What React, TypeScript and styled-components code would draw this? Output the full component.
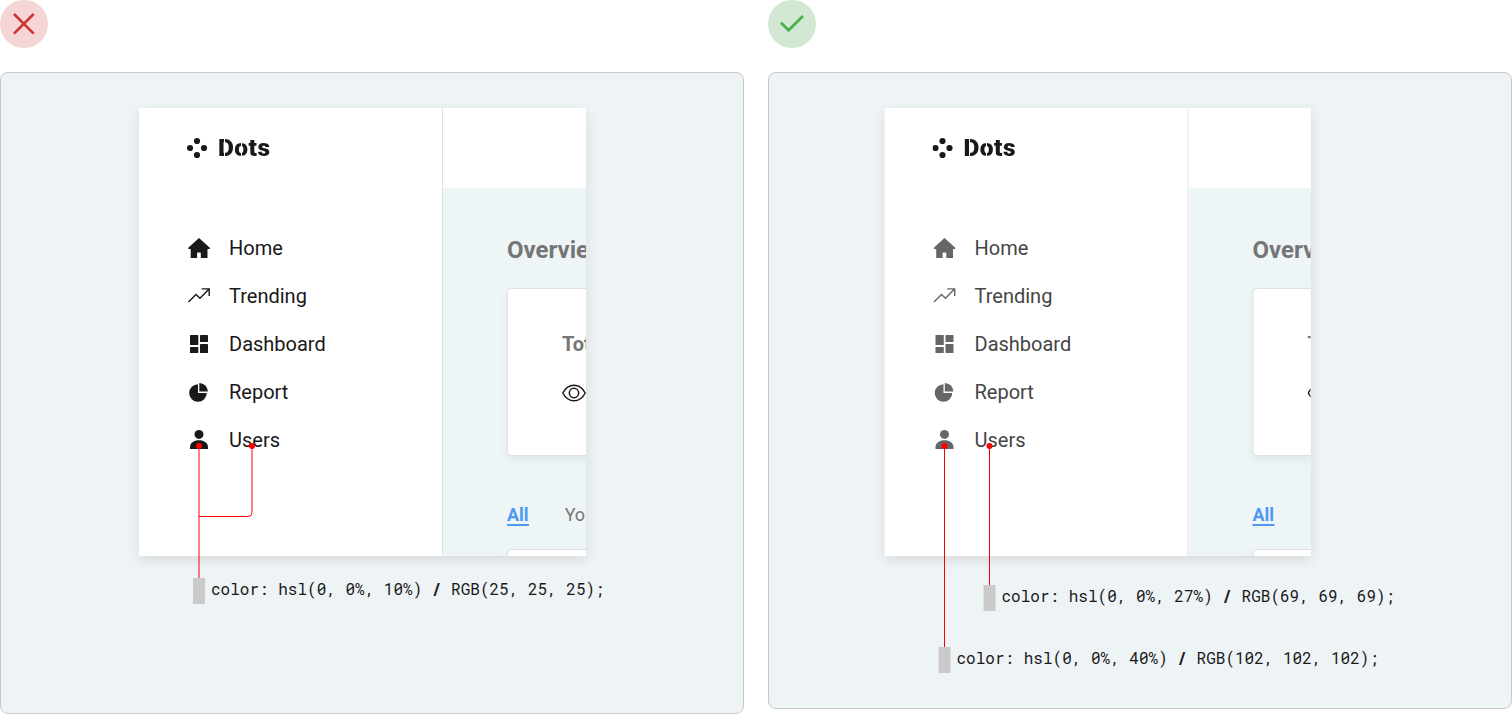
import React from 'react';
import styled, { createGlobalStyle } from 'styled-components';

const GlobalStyle = createGlobalStyle`
  *, *::before, *::after { box-sizing: border-box; }
  body { margin: 0; background: #fff; font-family: Roboto, sans-serif; overflow: hidden; }
  svg { display: block; }
`;

const Comparison = styled.main`
  display: grid;
  grid-template-columns: 744px 744px;
  column-gap: 24px;
  align-items: start;
  width: 1512px;
  height: 714px;
`;

const Example = styled.section`
  display: flex;
  flex-direction: column;
  gap: 24px;
`;

const Badge = styled.div<{ $good: boolean }>`
  width: 48px;
  height: 48px;
  border-radius: 50%;
  background: ${(p) => (p.$good ? '#d2e8d3' : '#f5d5d6')};
  color: ${(p) => (p.$good ? '#4caf50' : '#cc3333')};
`;

const Panel = styled.div<{ $height: number }>`
  position: relative;
  height: ${(p) => p.$height}px;
  padding-top: 35px;
  border: 1px solid #c8c8c8;
  border-radius: 8px;
  background: #eef3f6;
`;

const Mock = styled.div<{ $left: number; $width: number; $shift: number }>`
  display: flex;
  width: ${(p) => p.$width}px;
  height: 448px;
  margin-left: ${(p) => p.$left}px;
  overflow: hidden;
  background: #fff;
  box-shadow: 0 4px 12px rgba(0, 0, 0, 0.1);
  transform: ${(p) => (p.$shift ? `translateX(${p.$shift}px)` : 'none')};
`;

const Sidebar = styled.aside`
  flex: none;
  width: 304px;
  padding: 28px 0 0 48px;
  border-right: 1px solid #e0e0e0;
`;

const Brand = styled.div`
  display: flex;
  align-items: center;
  gap: 9px;
  height: 24px;
  color: #191919;
`;

/* Thin transparent stripes slit the letters for the stencil look. */
const BrandName = styled.span`
  font-size: 24.5px;
  line-height: 24px;
  font-weight: 900;
  letter-spacing: 0.5px;
  color: transparent;
  background: linear-gradient(
    90deg,
    #191919 6px, transparent 6px, transparent 7px,
    #191919 7px, #191919 23px, transparent 23px, transparent 24px,
    #191919 24px
  );
  background-clip: text;
  -webkit-background-clip: text;
`;

const Menu = styled.nav`
  display: flex;
  flex-direction: column;
  margin-top: 64px;
`;

const MenuItem = styled.div<{ $color: string }>`
  display: flex;
  align-items: center;
  gap: 18px;
  height: 48px;
  font-size: 20px;
  line-height: 24px;
  color: ${(p) => p.$color};
`;

const MenuIcon = styled.svg<{ $color: string }>`
  flex: none;
  width: 24px;
  height: 24px;
  color: ${(p) => p.$color};
`;

const Content = styled.div`
  flex: none;
  width: 400px;
`;

const TopBar = styled.div`
  height: 80px;
  background: #fff;
`;

const Body = styled.div`
  height: 368px;
  padding: 46px 0 0 64px;
  background: #edf5f7;
`;

const Heading = styled.h2`
  margin: 0 0 22px;
  font-size: 24px;
  line-height: 32px;
  font-weight: 700;
  color: #757575;
`;

const Card = styled.div`
  height: 168px;
  padding: 43px 0 0 54px;
  border: 1px solid #e0e0e0;
  border-radius: 4px;
  background: #fff;
  box-shadow: 0 4px 10px rgba(0, 0, 0, 0.06);
`;

const CardTitle = styled.div`
  margin-bottom: 25px;
  font-size: 20px;
  line-height: 24px;
  font-weight: 700;
  color: #757575;
`;

const Tabs = styled.div`
  display: flex;
  gap: 36px;
  height: 24px;
  margin: 46px 0 23px;
`;

const Tab = styled.span<{ $active?: boolean }>`
  height: 24px;
  font-size: 18px;
  line-height: 26px;
  font-weight: ${(p) => (p.$active ? 700 : 400)};
  color: ${(p) => (p.$active ? '#4f98f3' : '#757575')};
  border-bottom: ${(p) => (p.$active ? '2px solid #4f98f3' : '0')};
`;

const Note = styled.div<{ $left: number; $top: number }>`
  display: flex;
  align-items: flex-start;
  gap: 6px;
  height: 26px;
  margin: ${(p) => p.$top}px 0 0 ${(p) => p.$left}px;
`;

const Swatch = styled.svg`
  flex: none;
  width: 12px;
  height: 26px;
  overflow: visible;
`;

const Code = styled.code`
  display: block;
  font: 400 16px/22px "Roboto Mono", "DejaVu Sans Mono", monospace;
  white-space: pre;
  color: #191919;
`;

const Leaders = styled.svg`
  position: absolute;
  left: -1px;
  top: -1px;
  pointer-events: none;
`;

function HomeIcon({ color }: { color: string }) {
  return (
    <MenuIcon $color={color} viewBox="0 0 24 24">
      <path fill="currentColor" d="M12 1.9 22.8 11.8V13H20.5V22H13.8V17a.6.6 0 0 0-.6-.6H10.7a.6.6 0 0 0-.6.6v5H3.7V13H1.3V11.8Z" />
    </MenuIcon>
  );
}

function TrendingIcon({ color }: { color: string }) {
  return (
    <MenuIcon $color={color} viewBox="0 0 24 24">
      <path fill="none" stroke="currentColor" strokeWidth="1.4" d="M1.5 18 9 10.4 13 14.2 22 5M14.7 4.9H22.2V12" />
    </MenuIcon>
  );
}

function DashboardIcon({ color }: { color: string }) {
  return (
    <MenuIcon $color={color} viewBox="0 0 24 24">
      <g fill="currentColor">
        <rect x="3" y="3" width="8.3" height="10" rx=".6" />
        <rect x="3" y="15" width="8.3" height="6" rx=".6" />
        <rect x="13" y="3" width="8" height="7" rx=".6" />
        <rect x="13" y="12" width="8" height="9" rx=".6" />
      </g>
    </MenuIcon>
  );
}

function ReportIcon({ color }: { color: string }) {
  return (
    <MenuIcon $color={color} viewBox="0 0 24 24">
      <g fill="currentColor">
        <path d="M11 4.2V13.1H19.8A8.8 8.8 0 1 1 11 4.2Z" />
        <path d="M12.3 2.9A8.7 8.7 0 0 1 20.9 11.6H12.3Z" />
      </g>
    </MenuIcon>
  );
}

function UsersIcon({ color }: { color: string }) {
  return (
    <MenuIcon $color={color} viewBox="0 0 24 24">
      <circle cx="12" cy="6.4" r="4.5" fill="currentColor" />
      <path fill="currentColor" d="M3 21V19.2C3 15 7 12.3 12 12.3S21 15 21 19.2V21Z" />
    </MenuIcon>
  );
}

const menu = [
  { label: 'Home', Icon: HomeIcon },
  { label: 'Trending', Icon: TrendingIcon },
  { label: 'Dashboard', Icon: DashboardIcon },
  { label: 'Report', Icon: ReportIcon },
  { label: 'Users', Icon: UsersIcon },
];

interface MockupProps {
  left: number;
  shift?: number;
  width: number;
  textColor: string;
  iconColor: string;
}

function Mockup({ left, shift = 0, width, textColor, iconColor }: MockupProps) {
  return (
    <Mock $left={left} $width={width} $shift={shift}>
      <Sidebar>
        <Brand>
          <svg width="22" height="24" viewBox="0 0 22 24" fill="currentColor">
            <circle cx="10" cy="5" r="3.1" />
            <circle cx="3" cy="12" r="3.1" />
            <circle cx="17" cy="12" r="3.1" />
            <circle cx="10" cy="19" r="3.1" />
          </svg>
          <BrandName>Dots</BrandName>
        </Brand>
        <Menu>
          {menu.map(({ label, Icon }) => (
            <MenuItem key={label} $color={textColor}>
              <Icon color={iconColor} />
              {label}
            </MenuItem>
          ))}
        </Menu>
      </Sidebar>
      <Content>
        <TopBar />
        <Body>
          <Heading>Overview</Heading>
          <Card>
            <CardTitle>Total</CardTitle>
            <svg width="24" height="24" viewBox="0 0 24 24" fill="none" stroke="#191919" strokeWidth="1.5">
              <path d="M.8 12C3.2 7.4 7.2 4.2 12 4.2S20.8 7.4 23.2 12C20.8 16.6 16.8 19.8 12 19.8S3.2 16.6.8 12Z" />
              <circle cx="12" cy="12" r="4.7" />
            </svg>
          </Card>
          <Tabs>
            <Tab $active>All</Tab>
            <Tab>Yours</Tab>
          </Tabs>
          <Card />
        </Body>
      </Content>
    </Mock>
  );
}

interface ColorNoteProps {
  left: number;
  top: number;
  inset?: number;
  hsl: string;
  rgb: string;
}

function ColorNote({ left, top, inset = 0, hsl, rgb }: ColorNoteProps) {
  return (
    <Note $left={left} $top={top}>
      <Swatch>
        <rect x={inset} width="12" height="26" fill="#cacaca" />
      </Swatch>
      <Code>
        color: {hsl} <b>/</b> {rgb};
      </Code>
    </Note>
  );
}

export default function App() {
  return (
    <>
      <GlobalStyle />
      <Comparison>
        <Example>
          <Badge $good={false}>
            <svg width="48" height="48" fill="none" stroke="currentColor" strokeWidth="2.6">
              <path d="M14 14 33.7 33.7M33.7 14 14 33.7" />
            </svg>
          </Badge>
          <Panel $height={642}>
            <Mockup left={138} width={447} textColor="#191919" iconColor="#191919" />
            <ColorNote left={192} top={22} hsl="hsl(0, 0%, 10%)" rgb="RGB(25, 25, 25)" />
            <Leaders width="744" height="642" viewBox="0 72 744 642">
              <path d="M199 446V578M252 446V512.5Q252 516.5 248 516.5H199" fill="none" stroke="#f00" />
              <circle cx="199" cy="446" r="3" fill="#f00" />
              <circle cx="252" cy="446" r="3" fill="#f00" />
            </Leaders>
          </Panel>
        </Example>
        <Example>
          <Badge $good>
            <svg width="48" height="48" fill="none" stroke="currentColor" strokeWidth="2.8">
              <path d="M13 22.7 20.6 30.3 35 16" />
            </svg>
          </Badge>
          <Panel $height={637}>
            <Mockup left={116} shift={-0.5} width={426} textColor="#454545" iconColor="#666666" />
            <ColorNote left={214.5} top={29} inset={-0.5} hsl="hsl(0, 0%, 27%)" rgb="RGB(69, 69, 69)" />
            <ColorNote left={169.5} top={36} inset={-0.5} hsl="hsl(0, 0%, 40%)" rgb="RGB(102, 102, 102)" />
            <Leaders width="744" height="637" viewBox="768 72 744 637">
              <path d="M944.5 446V647M989.5 446V585" fill="none" stroke="#f00" />
              <circle cx="944.5" cy="446" r="3" fill="#f00" />
              <circle cx="989.5" cy="446" r="3" fill="#f00" />
            </Leaders>
          </Panel>
        </Example>
      </Comparison>
    </>
  );
}
